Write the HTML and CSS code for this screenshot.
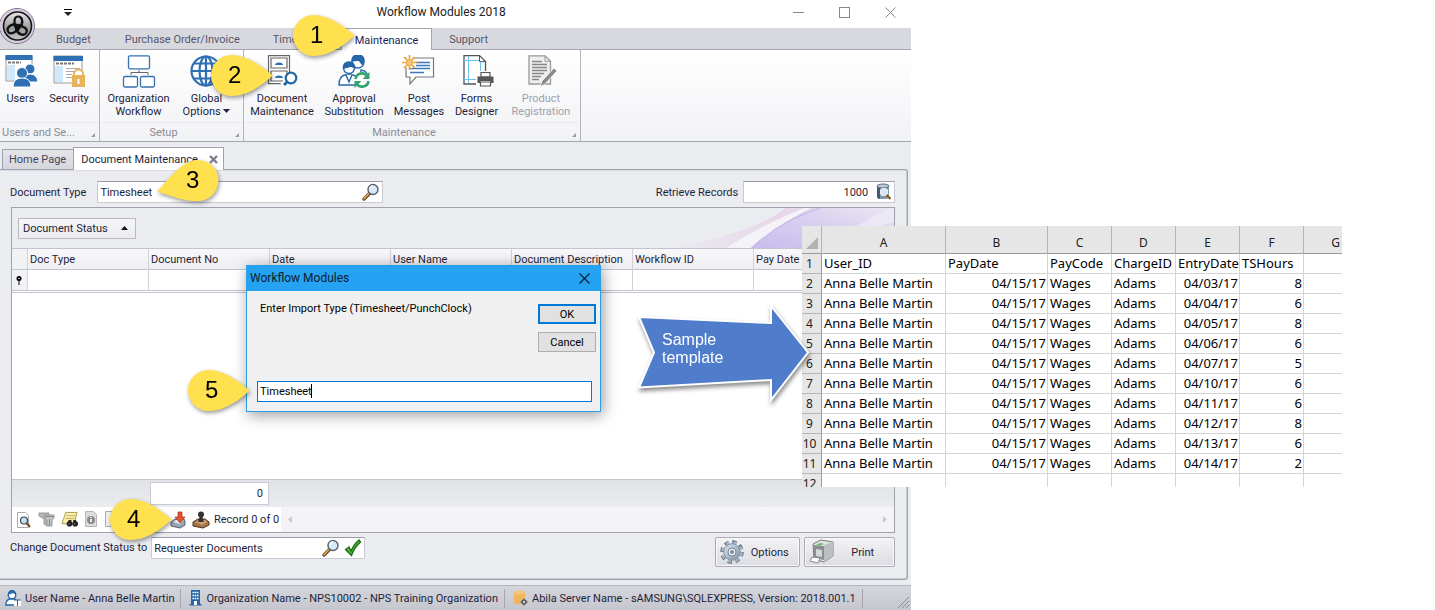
FILE: index.html
```html
<!DOCTYPE html>
<html lang="en">
<head>
<meta charset="utf-8">
<title>Workflow Modules 2018</title>
<link rel="stylesheet" href="styles.css">
</head>
<body>
<svg width="0" height="0" class="defs" aria-hidden="true">
  <defs>
    <linearGradient id="metal" x1="0" y1="0" x2="1" y2="1"><stop offset="0" stop-color="#f4f4f6"/><stop offset="1" stop-color="#8f939c"/></linearGradient>
    <linearGradient id="dark" x1="0" y1="0" x2="0" y2="1"><stop offset="0" stop-color="#e8e8ea"/><stop offset=".6" stop-color="#9a9a9c"/><stop offset="1" stop-color="#c9c9cb"/></linearGradient>
    <linearGradient id="steel" x1="0" y1="0" x2="1" y2="1"><stop offset="0" stop-color="#dfe8f0"/><stop offset="1" stop-color="#7d8d9f"/></linearGradient>
    <linearGradient id="violet" x1="0" y1="1" x2="1" y2="0"><stop offset="0" stop-color="#c9bcec"/><stop offset=".55" stop-color="#d9cff0"/><stop offset="1" stop-color="#ebe8f3"/></linearGradient>
    <linearGradient id="pink" x1="0" y1="0" x2="1" y2="0"><stop offset="0" stop-color="#e8d6ea" stop-opacity="0"/><stop offset=".8" stop-color="#e6d6ea"/><stop offset="1" stop-color="#e9dff0"/></linearGradient>
    <symbol id="lens" viewBox="0 0 18 18">
      <path d="M2 16 8 10" stroke="#6b4a26" stroke-width="3.4" stroke-linecap="round"/>
      <path d="M2 15.600 7.500 10" stroke="#d9a35c" stroke-width="1.600" stroke-linecap="round"/>
      <circle cx="11" cy="6.500" r="5" fill="#d9ebfa" stroke="#555f6e" stroke-width="1.400"/>
      <path d="M8 6a3 3 0 0 1 3-3" stroke="#fff" stroke-width="1.300" fill="none"/>
    </symbol>
    <symbol id="pin" viewBox="0 0 62 41">
      <path d="M61.500 20.500C52 12 36 0 20.500 0a20.500 20.500 0 0 0 0 41C36 41 52 30 61.500 20.500Z" fill="#ffe14f"/>
    </symbol>
  </defs>
</svg>

<div class="stage">
<main class="app">
  <header class="titlebar">
    <button class="quick" aria-label="Customize toolbar"><svg width="8" height="7" viewBox="0 0 8 7"><path d="M0 3h8L4 7z" fill="#222"/><rect width="8" height="1"/></svg></button>
    <h1>Workflow Modules 2018</h1>
    <div class="winbtns">
      <button aria-label="Minimize"><svg width="11" height="11"><path d="M0 5.500h11" stroke="#888"/></svg></button>
      <button aria-label="Maximize"><svg width="11" height="11"><rect x=".5" y=".5" width="10" height="10" fill="none" stroke="#888"/></svg></button>
      <button aria-label="Close"><svg width="11" height="11"><path d="M.5.5l10 10M10.500.5l-10 10" stroke="#888"/></svg></button>
    </div>
  </header>
  <button class="orb" aria-label="Application menu">
    <svg width="38" height="38" viewBox="0 0 38 38">
      <circle cx="18" cy="19" r="17.500" fill="url(#metal)" stroke="#77777f"/>
      <circle cx="18" cy="19" r="15.800" fill="none" stroke="#d8c8e2" stroke-width="2.400"/>
      <circle cx="18.500" cy="19" r="14" fill="url(#dark)" stroke="#161616" stroke-width="1.600"/>
      <g fill="none" stroke="#111" stroke-linecap="round">
        <g id="loop"><path d="M19.500 22.500C14 19 14.500 9.500 19 9.500c5 0 5.500 7 1.500 11" stroke-width="2.200"/><path d="M21.500 10.500c3 2.500 2.500 7-.5 10" stroke-width="1.800"/></g>
        <use href="#loop" transform="rotate(120 18.500 20)"/>
        <use href="#loop" transform="rotate(240 18.500 20)"/>
      </g>
    </svg>
  </button>
  <nav class="tabs">
    <a href="#">Budget</a><a href="#">Purchase Order/Invoice</a><a href="#" class="time">Time</a><a href="#" class="on">Maintenance</a><a href="#">Support</a>
  </nav>

  <div class="ribbon">
    <section class="group g1">
      <div class="tools">
        <button><svg width="34" height="33" viewBox="0 0 34 33">
          <path d="M2 1h26v25H2z" fill="#fff" stroke="#9a9a9a"/><path d="M1.500 0h27v5h-27z" fill="#2f6fb3"/><path d="M4 7.500h13" stroke="#777" stroke-width="2" stroke-dasharray="3 1"/><path d="M3 10h8v15H3z" fill="#cfe9fb"/>
          <g fill="#2f6fb3" stroke="#fff"><circle cx="26" cy="14" r="5"/><path d="M19 27q0-8 7-8t8 8z"/><circle cx="18" cy="18" r="5.500"/><path d="M9 32q0-9 9-9t9 9z"/></g></svg><span>Users</span></button>
        <button><svg width="34" height="33" viewBox="0 0 34 33">
          <path d="M2 1h28v27H2z" fill="#fff" stroke="#9a9a9a"/><path d="M1.500 1h29.500v5H1.500z" fill="#2f6fb3"/><path d="M4 8.500h18" stroke="#777" stroke-width="2" stroke-dasharray="3 1"/><path d="M3 11h8v16H3z" fill="#cfe9fb"/><path d="M14 13.500h14M14 16.500h14M14 19.500h6M14 22.500h6" stroke="#aaa"/>
          <path d="M22 21v-2a4.500 4.500 0 0 1 9 0v2" fill="#fff" stroke="#e9b25c" stroke-width="2"/><path d="M20 20h13v12H20z" fill="#e9b25c"/><path d="M25.500 24h2v5h-2z" fill="#fff"/></svg><span>Security</span></button>
      </div>
      <h2>Users and Se...</h2>
    </section>
    <section class="group g2">
      <div class="tools">
        <button><svg width="34" height="33" viewBox="0 0 34 33"><g fill="#fff" stroke="#3470b2" stroke-width="1.300"><rect x="6.500" y=".8" width="21" height="13" rx="1.500"/><rect x="1.500" y="21.500" width="14" height="10.500" rx="1.500"/><rect x="18.500" y="21.500" width="14" height="10.500" rx="1.500"/></g><path d="M17 15v3M9 20v-2.500h17V20" fill="none" stroke="#666"/></svg><span>Organization<br>Workflow</span></button>
        <button><svg width="34" height="33" viewBox="0 0 34 33"><g fill="none" stroke="#2f6fb3" stroke-width="2.200"><circle cx="16" cy="16" r="14.500"/><ellipse cx="16" cy="16" rx="6.500" ry="14.500"/><path d="M16 1v30M1 16h30M4 8.500h24M4 23.500h24"/></g><circle cx="26" cy="25" r="6" fill="#2f6fb3"/></svg><span>Global<br>Options <svg width="7" height="6"><path d="M0 0h7L3.500 4z" fill="#224"/></svg></span></button>
      </div>
      <h2>Setup</h2>
    </section>
    <section class="group g3">
      <div class="tools">
        <button><svg width="34" height="33" viewBox="0 0 34 33"><g fill="#fff" stroke="#666" stroke-width="1.200"><path d="M3.500.6h21v28h-21z"/><path d="M6 3h16v10H6zM6 16h16v10H6z"/></g><path d="M10 10q0-2.500 4-2.500t4 2.500zM10 23q0-2.500 4-2.500t4 2.500z" fill="#2f6fb3"/><path d="m18 31 4-4" stroke="#fff" stroke-width="7"/><circle cx="26" cy="23" r="5.300" fill="#fff" stroke="#2366a8" stroke-width="2.200"/><path d="m19 30 3.500-3.500" stroke="#2366a8" stroke-width="3"/></svg><span>Document<br>Maintenance</span></button>
        <button><svg width="34" height="33" viewBox="0 0 34 33"><g stroke="#2767a8" stroke-width="1.400" fill="#fff"><path d="M24 15q7 1 7 8h-8z"/><circle cx="21" cy="7" r="6"/><path d="M15 6q0-6 6-6t6 6l-2 3-3-4z" fill="#2767a8"/><path d="M2 30q0-9 6-10h8q5 1 6 10z"/><circle cx="12" cy="13" r="5.500"/><path d="M6.500 13q0-6 5.500-6t5.500 6l-3-2z" fill="#2767a8"/><path d="m9 20 3 7 3-7" /></g><circle cx="25" cy="25" r="8" fill="#fff"/><path d="M18.500 24a6.500 6.500 0 0 1 12-2.500M31.500 26a6.500 6.500 0 0 1-12 2.500" fill="none" stroke="#2fa56d" stroke-width="2.600"/><path d="M32.500 17v7h-7zM17.500 33v-7h7z" fill="#2fa56d"/></svg><span>Approval<br>Substitution</span></button>
        <button><svg width="34" height="33" viewBox="0 0 34 33"><path d="M4 3h27.500v19H14l-6 7v-7H4z" fill="#fff" stroke="#777" stroke-width="1.200"/><path d="M14 7.500h14M14 10.500h14M8 13.500h20M8 17.500h14" stroke="#3b78b8" stroke-width="1.300"/><circle cx="7.500" cy="7.500" r="6" fill="#fff"/><path d="M7.500 0v15M0 7.500h15M2 2l11 11M13 2 2 13" stroke="#eba53f" stroke-width="1.700"/><circle cx="7.500" cy="7.500" r="3" fill="#f5c878" stroke="#eba53f"/></svg><span>Post<br>Messages</span></button>
        <button><svg width="34" height="33" viewBox="0 0 34 33"><path d="M4 .6h15.500l6 6V29H4z" fill="#fff" stroke="#555" stroke-width="1.300"/><path d="M19.500.6v6h6" fill="none" stroke="#555"/><path d="M8.500 1v27M20.500 7v21M4 5.500h15M4 24.500h16" stroke="#6cc3ee"/><path d="M16 16h17v16H16z" fill="#fff"/><path d="M21 17.500h9V22h-9zM20.500 27h10v4h-10z" fill="#fff" stroke="#555" stroke-width="1.200"/><path d="M17.500 21.500h16V28h-3v-2h-10v2h-3z" fill="#555"/></svg><span>Forms<br>Designer</span></button>
        <button disabled><svg width="34" height="33" viewBox="0 0 34 33"><path d="M5 .8h16l5.500 5.500V29H5z" fill="#eee" stroke="#999" stroke-width="1.300"/><path d="M21 .8v5.500h5.500" fill="none" stroke="#999"/><path d="M8 6.500h10M8 9.500h15M8 12.500h15M8 15.500h15M8 18.500h12M8 21.500h9M8 24.500h7" stroke="#888" stroke-width="1.400"/><path d="m16 32 2-6 12-13 3 3-12 13z" fill="#888" stroke="#fff" stroke-width=".8"/></svg><span>Product<br>Registration</span></button>
      </div>
      <h2>Maintenance</h2>
    </section>
  </div>

  <nav class="doctabs">
    <a href="#">Home Page</a>
    <a href="#" class="on">Document Maintenance <svg width="9" height="9"><path d="m1 1 7 7M8 1 1 8" stroke="#7c7d89" stroke-width="2.400"/></svg></a>
  </nav>

  <div class="panel">
    <div class="filters">
      <label for="dtype">Document Type</label>
      <div class="field wide"><input id="dtype" value="Timesheet"><svg width="18" height="18"><use href="#lens"/></svg></div>
      <label for="recs" class="push">Retrieve Records</label>
      <div class="field recs"><input id="recs" value="1000"><svg width="16" height="18" viewBox="0 0 16 18"><path d="M2 3v11q0 2 6 2t6-2V3z" fill="#7f98b2"/><path d="M2 3v11q0 1.500 3 2V4z" fill="#46586b"/><ellipse cx="8" cy="3" rx="6" ry="2" fill="#b9cadb" stroke="#667"/><circle cx="9" cy="9" r="3.500" fill="#d3e7f8" stroke="#f2f2f2" stroke-width="1.200"/><path d="m11.500 12 4 4" stroke="#8b5a24" stroke-width="2.400"/></svg></div>
    </div>

    <div class="gridbox">
      <div class="groupby">
        <svg class="swoosh" width="230" height="40" viewBox="-30 0 200 40" preserveAspectRatio="none"><path d="M-30 40C10 34 50 22 76 0h24L46 40z" fill="url(#pink)"/><path d="M24 40Q56 16 92 0h14Q72 14 46 40z" fill="#f4f3f8"/><path d="M46 40Q72 14 98 0h72v40z" fill="url(#violet)"/><path d="M46 40Q72 12 106 0" fill="none" stroke="#bba8e8" opacity=".7"/><path d="M130 24Q150 8 170 0v14q-20 4-40 26z" fill="#efecf6" opacity=".7"/></svg>
        <button>Document Status <svg width="7" height="4"><path d="M0 4h7L3.500 0z" fill="#112"/></svg></button>
      </div>
      <table class="grid">
        <thead><tr><th class="ind"></th><th>Doc Type</th><th>Document No</th><th>Date</th><th>User Name</th><th>Document Description</th><th>Workflow ID</th><th class="last">Pay Date</th></tr></thead>
        <tbody><tr><td class="ind"><svg width="6" height="9"><circle cx="3" cy="2.500" r="2.500"/><path d="M2.500 4h1v5h-1z"/><circle cx="3" cy="2.500" r=".8" fill="#fff"/></svg></td><td></td><td></td><td></td><td></td><td></td><td></td><td></td></tr></tbody>
      </table>
      <div class="rows"></div>
      <div class="foot"><output>0</output></div>
      <div class="navigator">
        <div class="navtools">
          <button aria-label="Preview"><svg width="16" height="18" viewBox="0 0 16 18"><path d="M1.500 1.500h8l3 3v12h-11z" fill="#fff" stroke="#aaa"/><circle cx="8" cy="9.500" r="3.500" fill="#c4dff2" stroke="#444" stroke-width="1.200"/><path d="m10.500 12 3.500 4" stroke="#7a4a22" stroke-width="2"/></svg></button>
          <button aria-label="Columns"><svg width="17" height="17" viewBox="0 0 17 17"><path d="M1 2h10v3L9 8v7l-3-2V8L1 5z" fill="#b4b4b4" stroke="#999"/><path d="M7 4h9v3l-2 2v6h-5V9L7 7z" fill="#c4c4c4" stroke="#999"/><path d="M7 5.500h9M11.500 8v7" stroke="#888"/></svg></button>
          <button aria-label="Find"><svg width="17" height="17" viewBox="0 0 18 17"><path d="M5 1h12l-3 12H1z" fill="#f8edaa" stroke="#a8974a"/><path d="M6 4.500h9M5 7.500h9" stroke="#c0ad60"/><circle cx="9" cy="13" r="3" fill="#222"/><circle cx="15" cy="13" r="3" fill="#222"/><path d="M8 9h3v3H8zM13 9h3v3h-3z" fill="#222"/><path d="M8 13h1M14 13h1" stroke="#9bd"/></svg></button>
          <button aria-label="Details"><svg width="14" height="17" viewBox="0 0 14 17"><path d="M1.500.5h8l3 3v12h-11z" fill="#ddd" stroke="#b4b4b4"/><circle cx="7" cy="9" r="4" fill="#888"/><path d="M7 6v1M7 8v3" stroke="#fff" stroke-width="1.600"/></svg></button>
          <button aria-label="Page"><svg width="14" height="17" viewBox="0 0 14 17"><path d="M1.500.5h11v15h-11z" fill="#eee" stroke="#aaa"/></svg></button>
          <button aria-label="Import" class="import"><svg width="16" height="18" viewBox="0 0 16 18"><path d="m1 11 4-3h9l1 3v3l-5 3-9-2z" fill="#9aa4b4" stroke="#59616f"/><path d="m3 11 3-2h7l-3 4z" fill="#e4e9f0"/><path d="M8 1h4v5h3l-5 6-5-6h3z" fill="#e4522d" stroke="#a8300f" stroke-width=".7"/></svg></button>
          <button aria-label="Stamp"><svg width="18" height="18" viewBox="0 0 18 18"><path d="m1 11 5-3h7l4 3v3l-6 3-10-2z" fill="#a4754a" stroke="#4d3420"/><path d="m3 11 4-2h6l2 2-5 3z" fill="#d0a273"/><circle cx="9" cy="3.500" r="3" fill="#333"/><path d="M8 5h2l2 6H6z" fill="#333"/></svg></button>
          <span>Record 0 of 0</span>
        </div>
        <div class="scroll"><svg width="4" height="7"><path d="M4 0v7L0 3.500z" fill="#c9c9d2"/></svg><svg width="4" height="7"><path d="M0 0v7l4-3.500z" fill="#c9c9d2"/></svg></div>
      </div>
    </div>

    <div class="actions">
      <label for="status">Change Document Status to</label>
      <div class="field status"><input id="status" value="Requester Documents"><svg width="18" height="18"><use href="#lens"/></svg><svg width="18" height="18" viewBox="0 0 18 18"><path d="M1.500 10.500 5 8l2 4Q10 5 15 1l1.500 2Q10 9 7.500 16.500z" fill="#4fb834" stroke="#1f6a17" stroke-width="1.300"/></svg></div>
      <button class="big push"><svg width="24" height="24" viewBox="0 0 24 24"><circle cx="12" cy="12" r="9.500" fill="none" stroke="#59677a" stroke-width="4.500" stroke-dasharray="4 3.460"/><circle cx="12" cy="12" r="9.300" fill="none" stroke="#a9b9c9" stroke-width="3.200" stroke-dasharray="3.400 4.040" stroke-dashoffset="-.3"/><circle cx="12" cy="12" r="8.300" fill="url(#steel)" stroke="#8495a8"/><circle cx="12" cy="12" r="4" fill="#eef3f8" stroke="#77889b"/><circle cx="12" cy="12" r="2" fill="#7c8b9c"/></svg><span>Options</span></button>
      <button class="big print"><svg width="26" height="26" viewBox="0 0 26 26"><path d="m4 5 8-4 12 2v14l-9 6-10-3z" fill="#e2e4e5" stroke="#777"/><path d="m15 6 9-3v14l-9 6z" fill="#bcbfc2"/><path d="m5 6 10 1v14L5 19z" fill="#8a8f93"/><path d="m7 10 6 1v7l-6-1z" fill="#d4d8da"/><path d="M7 5.500 12 4l3 1-4 1.500z" fill="#5fc05a"/><path d="m3 18 8 1-2 5-8-2z" fill="#fff" stroke="#888"/></svg><span>Print</span></button>
    </div>
  </div>

  <footer class="statusbar">
    <span><svg width="16" height="16" viewBox="0 0 16 16"><circle cx="7" cy="5" r="3.800" fill="#fff" stroke="#2767a8" stroke-width="1.400"/><path d="M3 5q0-5 4-5t4 5L8 3z" fill="#2767a8"/><path d="M.8 15q0-5 4-6h4q4 1 4 6z" fill="#fff" stroke="#2767a8" stroke-width="1.300"/><path d="M9 10h7v6H9z" fill="#fff"/><path d="M9 10h7M12.500 10v6" stroke="#2767a8"/></svg>User Name - Anna Belle Martin</span>
    <span><svg width="13" height="16" viewBox="0 0 13 16"><path d="M2 0h9v14h1.500v1.500H.5V14H2z" fill="#2767a8"/><path d="M3.500 2.500h6M3.500 5.500h6M3.500 8.500h6" stroke="#fff" stroke-width="1.500" stroke-dasharray="1.600 .6"/><path d="M5 11h3v4H5z" fill="#fff"/></svg>Organization Name - NPS10002 - NPS Training Organization</span>
    <span><svg width="15" height="16" viewBox="0 0 15 16"><path d="M1 2.500v10q0 2 5.500 2t5.500-2v-10z" fill="#efb65c"/><ellipse cx="6.500" cy="2.500" rx="5.500" ry="2" fill="#f4c67c"/><circle cx="11" cy="12" r="3.600" fill="#d0d1d8"/><circle cx="11" cy="12" r="2" fill="none" stroke="#555" stroke-width="1.500"/><path d="M11 8.500v1M11 14.500v1M7.500 12h1M13.500 12h1" stroke="#555" stroke-width="1.300"/></svg>Abila Server Name - sAMSUNG\SQLEXPRESS, Version: 2018.001.1</span>
    <svg class="grip" width="11" height="11"><path d="M0 11 11 0M4 11l7-7M8 11l3-3" stroke="#8b8c96"/></svg>
  </footer>
</main>

<form class="dialog">
  <header>Workflow Modules <button type="button" aria-label="Close"><svg width="11" height="11"><path d="M.5.5l10 10M10.500.5l-10 10" stroke="#0c2233" stroke-width="1.200"/></svg></button></header>
  <div class="dbody">
    <label for="imp">Enter Import Type (Timesheet/PunchClock)</label>
    <div class="dbtns"><button type="button" class="ok">OK</button><button type="button">Cancel</button></div>
  </div>
  <div class="entry"><input id="imp" value="Timesheet"><i class="caret"></i></div>
</form>

<div class="sheet">
<table>
<colgroup><col class="cn"><col class="ca"><col class="cb"><col><col><col><col><col></colgroup>
<thead><tr><th><svg width="12" height="12"><path d="M12 0v12H0z" fill="#b2b2b2"/></svg></th><th>A</th><th>B</th><th>C</th><th>D</th><th>E</th><th>F</th><th>G</th></tr></thead>
<tbody>
<tr class="names"><th>1</th><td>User_ID</td><td>PayDate</td><td>PayCode</td><td>ChargeID</td><td>EntryDate</td><td>TSHours</td><td></td></tr>
<tr><th>2</th><td>Anna Belle Martin</td><td>04/15/17</td><td>Wages</td><td>Adams</td><td>04/03/17</td><td>8</td><td></td></tr>
<tr><th>3</th><td>Anna Belle Martin</td><td>04/15/17</td><td>Wages</td><td>Adams</td><td>04/04/17</td><td>6</td><td></td></tr>
<tr><th>4</th><td>Anna Belle Martin</td><td>04/15/17</td><td>Wages</td><td>Adams</td><td>04/05/17</td><td>8</td><td></td></tr>
<tr><th>5</th><td>Anna Belle Martin</td><td>04/15/17</td><td>Wages</td><td>Adams</td><td>04/06/17</td><td>6</td><td></td></tr>
<tr><th>6</th><td>Anna Belle Martin</td><td>04/15/17</td><td>Wages</td><td>Adams</td><td>04/07/17</td><td>5</td><td></td></tr>
<tr><th>7</th><td>Anna Belle Martin</td><td>04/15/17</td><td>Wages</td><td>Adams</td><td>04/10/17</td><td>6</td><td></td></tr>
<tr><th>8</th><td>Anna Belle Martin</td><td>04/15/17</td><td>Wages</td><td>Adams</td><td>04/11/17</td><td>6</td><td></td></tr>
<tr><th>9</th><td>Anna Belle Martin</td><td>04/15/17</td><td>Wages</td><td>Adams</td><td>04/12/17</td><td>8</td><td></td></tr>
<tr><th>10</th><td>Anna Belle Martin</td><td>04/15/17</td><td>Wages</td><td>Adams</td><td>04/13/17</td><td>6</td><td></td></tr>
<tr><th>11</th><td>Anna Belle Martin</td><td>04/15/17</td><td>Wages</td><td>Adams</td><td>04/14/17</td><td>2</td><td></td></tr>
<tr><th>12</th><td></td><td></td><td></td><td></td><td></td><td></td><td></td></tr>
</tbody>
</table>
</div>

<div class="arrow">
  <svg width="176" height="104" viewBox="0 0 176 104"><path d="M4 14 136 20V3l37 46.500L136 97V77L4 84.500l15-35z" fill="#4f7ccb" stroke="#fff" stroke-width="2"/></svg>
  <p>Sample<br>template</p>
</div>

<div class="pin p1"><svg width="62" height="41"><use href="#pin"/></svg><b>1</b></div>
<div class="pin p2"><svg width="62" height="41"><use href="#pin"/></svg><b>2</b></div>
<div class="pin p3"><svg width="62" height="41" viewBox="0 0 62 41"><path d="M0 31.500C10 22 24 0 41 0a20.500 20.500 0 0 1 0 41C27 42 12 35 0 31.500Z" fill="#ffe14f"/></svg><b>3</b></div>
<div class="pin p4"><svg width="62" height="41"><use href="#pin"/></svg><b>4</b></div>
<div class="pin p5"><svg width="62" height="41"><use href="#pin"/></svg><b>5</b></div>
</div>
</body>
</html>
```

FILE: styles.css
```css
* { box-sizing: border-box; }
body { margin: 0; background: #fff; color: #1e1e3a; font: 11px/13px Roboto, "Liberation Sans", sans-serif; }
button, input { font: inherit; color: inherit; margin: 0; padding: 0; border: 0; background: none; }
a { color: inherit; text-decoration: none; }
h1, h2, p { margin: 0; font-weight: normal; }
svg { display: block; flex: none; }
span svg { display: inline-block; }
.defs { position: absolute; }
.push { margin-left: auto; }

.stage { position: relative; min-height: 100vh; overflow: hidden; display: flex; }
.app { position: relative; width: 63.5%; display: flex; flex-direction: column; background: #ebecf0; }

.titlebar { display: grid; grid-template-columns: 1fr auto 1fr; align-items: center; height: 28px; padding: 0 15px 4px 64px; background: #fff; }
.titlebar h1 { font-size: 12px; line-height: 16px; color: #222; padding-right: 78px; }
.quick { justify-self: start; }
.winbtns { display: flex; gap: 35px; justify-self: end; }
.orb { position: absolute; left: -1px; top: 7px; }

.tabs { display: flex; height: 22px; padding-left: 39px; background: #d8d9df; border-bottom: 1px solid #a5a6b0; }
.tabs a { padding: 0 17px; line-height: 24px; color: #55566a; }
.tabs .time { width: 84px; padding-left: 16px; }
.tabs .on { height: 22px; padding: 0 13px; background: #fff; border: 1px solid #a5a6b0; border-bottom: 0; color: #1e1e5a; line-height: 23px; }

.ribbon { display: flex; height: 92px; background: linear-gradient(#fff, #f1f2f5); border-bottom: 1px solid #a5a6ac; }
.group { position: relative; display: flex; flex-direction: column; border-right: 1px solid #b3b4bd; }
.group::after { content: ""; position: absolute; right: 4px; bottom: 4px; border: 2px solid #9b9ca6; border-top-color: transparent; border-left-color: transparent; }
.tools { display: grid; flex: 1; padding: 5px 4px 0 3px; }
.tools button { display: flex; flex-direction: column; align-items: center; gap: 4px; text-align: center; white-space: nowrap; }
.tools button:disabled { color: #a0a1ab; }
.g1 .tools { grid-template-columns: 41px 56px; padding: 5px 2px 0 0; }
.g2 .tools { grid-template-columns: 71px 65px; }
.g3 .tools { grid-template-columns: 70px 74px 56px 59px 70px; }
.group h2 { height: 19px; margin: 0 2px; font-size: 11px; line-height: 19px; text-align: center; color: #8b8c98; border-top: 1px solid #e6e7eb; }
.g1 h2 { text-align: left; }
.g2 h2, .g3 h2 { padding-right: 16px; }

.doctabs { display: flex; align-items: flex-end; height: 28px; padding-left: 2px; margin-bottom: -1px; }
.doctabs a { display: flex; align-items: center; gap: 11px; height: 21px; padding: 0 7px 0 6px; border: 1px solid #a0a1ad; border-right: 0; background: linear-gradient(#e4e5e9, #d6d7dd); color: #44455a; }
.doctabs .on { position: relative; height: 23px; padding: 0 5px 0 7px; border-right: 1px solid #a0a1ad; border-bottom: 0; background: #fff; color: #1e1e3a; }

.panel { display: flex; flex-direction: column; flex: 1; margin: 0 3px 5px 0; padding: 11px 12px 12px 11px; border: 1px solid #a0a1ad; border-left: 0; border-radius: 0 3px 3px 0; box-shadow: inset -1px -1px #c9cad4, inset 0 1px #d9dae2; }
.filters, .actions { display: flex; align-items: center; }
.filters { margin-bottom: 4px; }
.filters label, .actions label { margin-left: -1px; }
.field { display: flex; align-items: center; height: 22px; padding: 0 2px; background: #fff; border: 1px solid #c9cad4; border-top-color: #9b9cab; }
.field input { flex: 1; min-width: 0; outline: 0; }
.wide { width: 286px; margin-left: 11px; }
.recs { width: 152px; margin-left: 5px; padding-right: 3px; gap: 7px; }
.filters .recs input { text-align: right; }
.filters .push { margin-left: auto; }

.gridbox { display: flex; flex-direction: column; flex: 1; border: 1px solid #a0a1ad; background: #fff; }
.groupby { position: relative; display: flex; align-items: center; height: 40px; padding-left: 6px; background: #ebecf0; }
.groupby button { display: flex; align-items: center; justify-content: space-between; width: 118px; height: 21px; padding: 0 7px 0 4px; border: 1px solid #b9bac5; background: linear-gradient(#f6f6f8, #ebecef); }
.swoosh { position: absolute; right: 0; top: 0; }
.grid { width: 100%; table-layout: fixed; border-collapse: separate; border-spacing: 0; border-top: 1px solid #c3c4ce; }
.grid th, .grid td { width: 121px; height: 21px; padding: 0 2px; border-right: 1px solid #d0d1d9; border-bottom: 1px solid #c3c4ce; font-weight: normal; text-align: left; white-space: nowrap; }
.grid th { background: linear-gradient(#f8f8fa, #eeeff2); }
.grid .ind { width: 16px; padding: 0 4px; background: #f1f2f5; }
.grid .last { width: auto; }
.rows { flex: 1; margin-top: 1px; border-top: 1px solid #c3c4ce; border-bottom: 1px solid #c3c4ce; }
.foot { height: 27px; padding: 2px 0 0 138px; background: linear-gradient(#e1e2e7, #ebecef); }
.foot output { display: block; width: 119px; height: 23px; padding-right: 5px; line-height: 22px; text-align: right; background: #fff; border: 1px solid #c9cad4; }
.navigator { display: flex; height: 25px; }
.navtools { display: flex; align-items: center; gap: 6px; padding: 0 2px 0 4px; }
.navtools .import { margin-left: 46px; }
.navtools span { margin-left: -2px; white-space: nowrap; }
.scroll { display: flex; flex: 1; align-items: center; justify-content: space-between; padding: 0 7px; background: #f4f4f8; }

.actions { align-items: flex-start; margin-top: 4px; }
.actions label { line-height: 22px; }
.status { width: 214px; margin-left: 4px; gap: 4px; }
.big { display: flex; align-items: center; width: 85px; height: 30px; padding: 0 4px; border: 1px solid #a9aab5; border-radius: 2px; background: linear-gradient(#f3f3f5, #dcdde2); box-shadow: inset 0 0 0 1px #f8f8fa; }
.big span { flex: 1; text-align: center; }
.print { width: 91px; margin-left: 4px; }

.statusbar { position: relative; display: flex; align-items: center; height: 25px; padding-left: 5px; border-top: 1px solid #b4b5be; background: linear-gradient(#d5d6dc, #c6c7ce); }
.statusbar span { display: flex; align-items: center; gap: 4px; padding-right: 6px; margin-right: 8px; border-right: 1px solid #a4a5af; height: 19px; white-space: nowrap; }
.grip { margin: auto 2px 2px auto; }

.dialog { position: absolute; left: 246px; top: 265px; width: 355px; height: 147px; display: flex; flex-direction: column; background: #f0f0f0; border: 1px solid #2b9fea; box-shadow: 2px 3px 14px rgba(0,0,0,.4); color: #000; }
.dialog header { display: flex; align-items: center; justify-content: space-between; height: 25px; padding: 0 10px 0 3px; background: #26a2f2; font-size: 12px; color: #0c1d2b; }
.dbody { display: flex; flex: 1; justify-content: space-between; padding: 13px 4px 0 13px; }
.dbody label { line-height: 10px; }
.dbtns { display: flex; flex-direction: column; gap: 8px; }
.dbtns button { width: 58px; height: 20px; background: #e1e1e1; border: 1px solid #adadad; }
.dbtns .ok { border: 2px solid #0078d7; }
.entry { position: relative; margin: 0 8px 9px 10px; }
.entry input { display: block; width: 100%; height: 21px; padding: 0 2px; background: #fff; border: 1px solid #0078d7; outline: 0; }
.caret { position: absolute; left: 54px; top: 3px; width: 1px; height: 14px; background: #000; }

.sheet { position: absolute; left: 802px; top: 226px; width: 540px; height: 261px; overflow: hidden; background: #fff; }
.sheet table { width: 566px; table-layout: fixed; border-collapse: separate; border-spacing: 0; font: 13px/19px "Noto Sans", sans-serif; color: #000; }
.sheet col { width: 64px; }
.sheet .cn { width: 20px; }
.sheet .ca { width: 124px; }
.sheet .cb { width: 102px; }
.sheet th { padding: 0; background: #e6e6e6; border-right: 1px solid #9b9b9b; border-bottom: 1px solid #b5b5b5; font-weight: normal; color: #222; font-size: 12px; }
.sheet thead th { height: 28px; padding-top: 6px; border-bottom-color: #9b9b9b; border-right-color: #b5b5b5; }
.sheet thead svg { margin: 0 3px 0 auto; }
.sheet td { height: 20px; padding: 0 1px 0 2px; border-right: 1px solid #d4d4d4; border-bottom: 1px solid #d4d4d4; white-space: nowrap; }
.sheet tbody th { height: 20px; padding-right: 4px; }
.sheet td:nth-child(3), .sheet td:nth-child(6), .sheet td:nth-child(7) { text-align: right; }
.sheet .names td { text-align: left; }

.arrow { position: absolute; left: 635px; top: 303px; filter: drop-shadow(1px 3px 2px rgba(0,0,0,.45)); }
.arrow p { position: absolute; left: 27px; top: 28px; font: 16px/18px "Liberation Sans", sans-serif; color: #fff; }

.pin { position: absolute; width: 62px; height: 41px; filter: drop-shadow(1px 2px 2px rgba(0,0,0,.4)); color: #000; }
.pin b { position: absolute; left: 17px; top: 8px; font: 24px/24px "Liberation Sans", sans-serif; }
.p1 { left: 293px; top: 15px; }
.p2 { left: 211px; top: 55px; }
.p3 { left: 157px; top: 160px; }
.p3 b { left: 29px; }
.p4 { left: 110px; top: 499px; }
.p5 { left: 188px; top: 370px; }
```
